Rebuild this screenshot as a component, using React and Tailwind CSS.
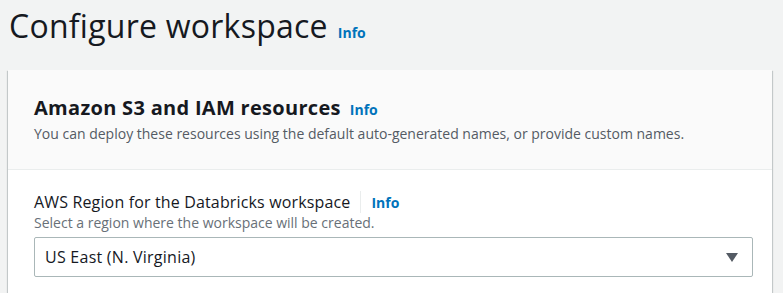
import React from 'react';

const font = { fontFamily: '"Open Sans", "Noto Sans", sans-serif' };

const Info = ({ className = '' }) => (
  <a href="#" className={`font-bold text-[#0073bb] ${className}`}>Info</a>
);

export default function App() {
  return (
    <div className="w-[783px] h-[293px] overflow-hidden bg-[#f2f3f3]" style={font}>
      <div className="flex items-baseline gap-[10px] pl-[9px] pt-[2px] h-[70px]">
        <h1 className="text-[32px] leading-[48px] text-[#16191f] tracking-[0.25px]">Configure workspace</h1>
        <Info className="text-[14px]" />
      </div>

      <div className="ml-[8px] mr-[11px] bg-white shadow-[0_1px_1px_0_rgba(0,28,36,0.3),1px_1px_1px_0_rgba(0,28,36,0.15),-1px_1px_1px_0_rgba(0,28,36,0.15)]">
        <div className="bg-[#fafafa] border-b border-[#eaeded] px-[26px] pt-[26px] pb-[25px]">
          <div className="flex items-baseline gap-[9px]">
            <h2 className="text-[20px] font-bold leading-[24px] text-[#16191f] tracking-[0.3px]">Amazon S3 and IAM resources</h2>
            <Info className="text-[14px]" />
          </div>
          <p className="mt-[4px] text-[14px] leading-[20px] text-[#545b64]">
            You can deploy these resources using the default auto-generated names, or provide custom names.
          </p>
        </div>

        <div className="px-[26px] pt-[21px] pb-[20px]">
          <div className="flex items-center">
            <span className="text-[16px] leading-[22px] text-[#16191f] pr-[10px] border-r border-[#eaeded] tracking-[0.15px]">AWS Region for the Databricks workspace</span>
            <Info className="text-[14px] pl-[10px]" />
          </div>
          <div className="text-[14px] leading-[20px] text-[#687078]">Select a region where the workspace will be created.</div>
          <div className="mt-[4px] mr-[-7px] h-[40px] flex items-center justify-between border border-[#aab7b8] rounded-[2px] pl-[10px] pr-[14px] bg-white">
            <span className="text-[16px] text-[#16191f] tracking-[0.25px]">US East (N. Virginia)</span>
            <svg width="12" height="9" viewBox="0 0 12 9"><path d="M0 0h12L6 9z" fill="#545b64" /></svg>
          </div>
        </div>
      </div>
    </div>
  );
}
